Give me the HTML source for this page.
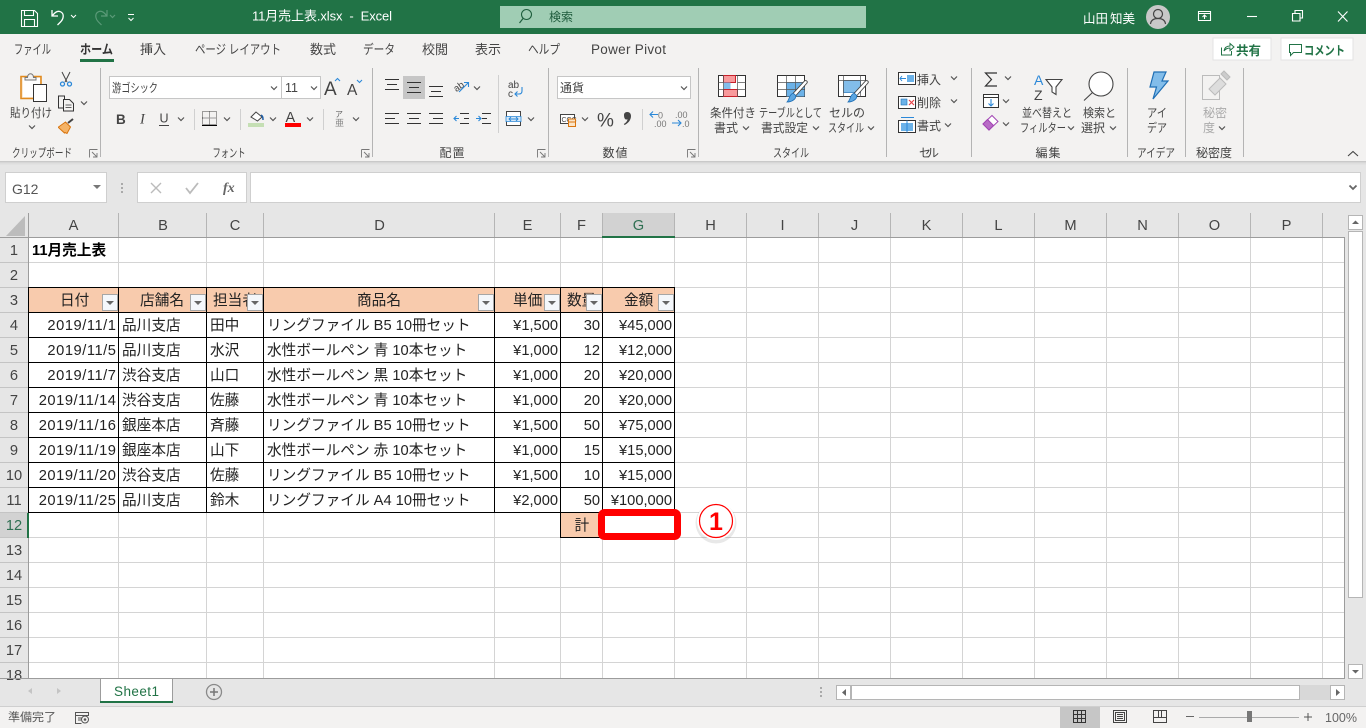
<!DOCTYPE html>
<html lang="ja"><head><meta charset="utf-8"><title>11月売上表.xlsx - Excel</title>
<style>
html,body{margin:0;padding:0;width:1366px;height:728px;overflow:hidden;background:#e6e6e6}
svg{display:block;position:absolute;left:0;top:0}
text{font-family:"Liberation Sans","Noto Sans CJK JP",sans-serif;white-space:pre}
.t{font-size:12px;fill:#444}
.tab{font-size:13px;fill:#444}
.g{font-size:12px;fill:#444}
.c{font-size:14.67px;fill:#222}
.r{text-anchor:end}
.m{text-anchor:middle}
.h{font-size:14.67px;fill:#444;text-anchor:middle}
.d{letter-spacing:.55px}
.l{stroke:#d4d4d4;stroke-width:1;shape-rendering:crispEdges}
.k{stroke:#000;stroke-width:1;shape-rendering:crispEdges}
.s{stroke:#b4b4b4;stroke-width:1.2;shape-rendering:crispEdges}
.ch{fill:none;stroke:#555;stroke-width:1.2}
</style></head><body>
<svg width="1366" height="728" viewBox="0 0 1366 728" xmlns="http://www.w3.org/2000/svg">
<defs>
<path id="v" class="ch" d="M-3-1.5 0 1.5 3-1.5"/>
<g id="fb"><rect x=".5" y=".5" width="15" height="16" fill="#f4f7fb" stroke="#a6a6a6"/><path d="M4 7h8l-4 4z" fill="#666"/></g>
</defs>

<!-- backgrounds -->
<rect width="1366" height="728" fill="#e6e6e6"/>
<rect y="34" width="1366" height="127" fill="#f3f2f1"/>
<rect y="161" width="1366" height="1" fill="#c9c9c9"/>
<rect y="162" width="1366" height="1" fill="#d6d6d6"/>
<rect y="163" width="1366" height="1" fill="#dedede"/>
<rect y="164" width="1366" height="1" fill="#e2e2e2"/>
<rect width="1366" height="34" fill="#217346"/>

<!-- title bar -->
<g fill="none" stroke="#fff" stroke-width="1.100">
<path d="M21.500 10.500h13l3 3v13h-16zM24.500 10.500v5h9v-5M24.500 26v-6.500h10V26"/>
<path d="M52 10v6h6M52.500 15.500c3-4 6-5 8.500-3.500 3.500 2 2.500 7-.5 10l-3 3" stroke-width="1.300"/>
<path d="M71 15l2.500 2.500L76 15" stroke-width="1"/>
<path d="M128 14.500h6M128.500 18l2.500 2.500 2.500-2.500" stroke-width="1"/>
</g>
<g fill="none" stroke="#5b9a78" stroke-width="1.200"><path d="M107 10v6h-6M106.500 15.500c-3-4-6-5-8.500-3.500-3.500 2-2.500 7 .5 10l3 3"/><path d="M110 15l2.500 2.500L115 15"/></g>
<text x="252" y="20.500" font-size="13" fill="#fff" textLength="140">11月売上表.xlsx  -  Excel</text>
<rect x="500" y="6" width="366" height="22" fill="#a0cdb4"/>
<circle cx="526.500" cy="14.500" r="5" fill="none" stroke="#1f5f3e" stroke-width="1.100"/><path d="M523 18.500l-3.500 4.500" stroke="#1f5f3e" stroke-width="1.200"/>
<text x="549" y="21" font-size="12" fill="#1e5b3c">検索</text>
<text x="1083" y="23" font-size="12.500" fill="#fff">山田</text><text x="1110" y="23" font-size="12.500" fill="#fff">知美</text>
<circle cx="1158" cy="17" r="12" fill="#c8c8c8"/>
<circle cx="1158" cy="14" r="4.500" fill="none" stroke="#444" stroke-width="1.200"/><path d="M1150.500 24c.5-4 3.500-5.500 7.500-5.500s7 1.500 7.500 5.500" fill="none" stroke="#444" stroke-width="1.200"/>
<g fill="none" stroke="#fff" stroke-width="1.100">
<path d="M1198.500 11.500h12v9h-12zM1198.500 13.500h12"/><path d="M1204.500 19v-4M1202.500 17l2-2 2 2"/>
<path d="M1247 16.500h10"/>
<path d="M1292.500 13.500h7.500v7.500h-7.500z"/><path d="M1295 13v-2.500h7.500V18H1300"/>
<path d="M1338 11.500l9.500 10M1347.500 11.500l-9.500 10"/>
</g>

<!-- tabs -->
<text class="tab" x="14" y="54" textLength="37" lengthAdjust="spacingAndGlyphs">ファイル</text>
<text class="tab" x="80" y="54" font-weight="700" style="fill:#333" textLength="33" lengthAdjust="spacingAndGlyphs">ホーム</text>
<rect x="80" y="59" width="34" height="3" fill="#217346"/>
<text class="tab" x="140" y="54">挿入</text>
<text class="tab" x="195" y="54" textLength="86" lengthAdjust="spacingAndGlyphs">ページ レイアウト</text>
<text class="tab" x="310" y="54">数式</text>
<text class="tab" x="363" y="54" textLength="32" lengthAdjust="spacingAndGlyphs">データ</text>
<text class="tab" x="422" y="54">校閲</text>
<text class="tab" x="475" y="54">表示</text>
<text class="tab" x="528" y="54" textLength="32" lengthAdjust="spacingAndGlyphs">ヘルプ</text>
<text class="tab" x="591" y="54" style="font-size:13.500px" textLength="75">Power Pivot</text>

<!-- share / comment -->
<rect x="1213" y="38" width="58" height="22" fill="#fff" stroke="#e3e3e3"/>
<rect x="1281" y="38" width="72" height="22" fill="#fff" stroke="#e3e3e3"/>
<path d="M1221.500 47.500v7.500h10v-4M1224 51c.5-3 2.500-5 6-5v-2.500l4 3.500-4 3.500V48c-2.500 0-4.500 1-6 3z" fill="none" stroke="#217346"/>
<text x="1236" y="55" font-size="12.500" font-weight="700" fill="#217346">共有</text>
<path d="M1289.500 44.500h12v8h-8l-3 3v-3h-1z" fill="none" stroke="#217346"/>
<text x="1304" y="55" font-size="12.500" font-weight="700" fill="#217346" textLength="41" lengthAdjust="spacingAndGlyphs">コメント</text>

<!-- group separators -->
<g class="s"><path d="M100.500 68v89M372.500 68v89M548.500 68v89M698.500 68v89M886.500 68v89M971.500 68v89M1127.500 68v89M1185.500 68v89M1243.500 68v89"/></g>

<!-- clipboard -->
<path d="M21 76.500h20v22H21z" fill="#fbe9d2" stroke="#e08a1e" stroke-width="1.600"/>
<rect x="23" y="78" width="17" height="19" fill="#fff"/>
<path d="M25 77.500h2.500c0-5 6-5 6 0H36v2.500H25z" fill="#f3f2f1" stroke="#777"/>
<rect x="33.500" y="84.500" width="13" height="17" fill="#fff" stroke="#333"/>
<text class="t" x="10" y="117" textLength="42" lengthAdjust="spacingAndGlyphs">貼り付け</text>
<use href="#v" x="32" y="127"/>
<g fill="none" stroke="#444"><path d="M62 72l5 10M70 72l-5 10"/><circle cx="62.500" cy="84" r="2" stroke="#2b88d8" stroke-width="1.300"/><circle cx="69.500" cy="84" r="2" stroke="#2b88d8" stroke-width="1.300"/></g>
<g fill="#f3f2f1" stroke="#333"><path d="M58.500 96h6v12h-6z"/><path d="M63.500 99.500h6l4 4v7.500h-10z"/><path d="M65.500 105h6M65.500 107.500h6" stroke-width=".8"/></g>
<use href="#v" x="84" y="103"/>
<path d="M58.500 127l7-5 5 5-3.500 6.500-2-1-.5.500-6-5.500z" fill="#f5b366" stroke="#d9750f"/>
<path d="M68 123l5-4" stroke="#444" stroke-width="2"/>
<text class="g" x="12" y="157" textLength="60" lengthAdjust="spacingAndGlyphs">クリップボード</text>
<path d="M89.500 149.500h8M89.500 149.500v8M92 152l5 5M97 153v4h-4" fill="none" stroke="#777" stroke-width=".9"/>

<!-- font -->
<rect x="109.500" y="76.500" width="172" height="22" fill="#fff" stroke="#c6c6c6"/>
<rect x="281.500" y="76.500" width="39" height="22" fill="#fff" stroke="#c6c6c6"/>
<text x="112" y="92" font-size="12" fill="#444" textLength="46" lengthAdjust="spacingAndGlyphs">游ゴシック</text>
<use href="#v" x="274" y="88"/>
<text x="285" y="92" font-size="12.500" fill="#444">11</text>
<use href="#v" x="314" y="88"/>
<text x="324" y="95" font-size="19" fill="#444">A</text>
<path d="M335 81l2.500-2.500 2.500 2.500" fill="none" stroke="#2b88d8" stroke-width="1.100"/>
<text x="347" y="95" font-size="15.500" fill="#444">A</text>
<path d="M357 80l2.500 2.500L362 80" fill="none" stroke="#2b88d8" stroke-width="1.100"/>
<text x="116" y="124" font-size="13.500" font-weight="700" fill="#444">B</text>
<text x="140" y="123.500" fill="#444" style="font-family:'Liberation Serif',serif;font-size:14.500px;font-style:italic">I</text>
<text x="159.500" y="122.500" font-size="12.500" fill="#444">U</text><path d="M159 125.500h10" stroke="#444" shape-rendering="crispEdges"/>
<use href="#v" x="181" y="119"/>
<path d="M194.500 109v21M240.500 109v21M323.500 109v21" stroke="#d0d0d0" shape-rendering="crispEdges"/>
<path d="M202.500 111.500h14v13h-14zM209.500 111.500v13M202.500 118h14" fill="none" stroke="#444" stroke-dasharray="1 1" shape-rendering="crispEdges"/><path d="M202 125.500h15" stroke="#000" shape-rendering="crispEdges"/>
<use href="#v" x="227" y="119"/>
<path d="M251 117l5-5 6 5-4.500 4z" fill="#fff" stroke="#444"/><path d="M261 115c2 1 2 3 2 5" stroke="#1f5fa8" stroke-width="1.500" fill="none"/>
<rect x="248" y="123" width="16" height="4" fill="#c5dfb4"/>
<use href="#v" x="273" y="119"/>
<text x="285.500" y="122" font-size="14.500" fill="#444">A</text>
<rect x="285" y="123" width="16" height="4" fill="#f00"/>
<use href="#v" x="310" y="119"/>
<text x="335" y="117" font-size="8" fill="#666">ア</text><text x="335" y="126" font-size="9" fill="#888">亜</text>
<use href="#v" x="356" y="119"/>
<text class="g m" x="229" y="157" textLength="33" lengthAdjust="spacingAndGlyphs">フォント</text>
<path d="M361.500 149.500h8M361.500 149.500v8M364 152l5 5M369 153v4h-4" fill="none" stroke="#777" stroke-width=".9"/>

<!-- alignment -->
<rect x="403" y="76" width="22" height="23" fill="#c6c6c6"/>
<g stroke="#333" stroke-width="1" shape-rendering="crispEdges">
<path d="M385 79.500h14M387 84.500h10M385 89.500h14"/>
<path d="M407 82.500h14M409 87.500h10M407 92.500h14"/>
<path d="M429 86.500h14M431 91.500h10M429 96.500h14"/>
<path d="M385 113.500h14M385 118.500h10M385 123.500h14"/>
<path d="M407 113.500h14M409 118.500h10M407 123.500h14"/>
<path d="M429 113.500h14M433 118.500h10M429 123.500h14"/>
<path d="M460 113.500h9M464 118.500h5M460 123.500h9"/>
<path d="M482 113.500h9M482 118.500h5M482 123.500h9"/>
</g>
<path d="M459 118.500h-5M456.500 116l-2.500 2.500 2.500 2.500" fill="none" stroke="#2b88d8" stroke-width="1.100"/>
<path d="M476 118.500h5M478.500 116l2.500 2.500-2.500 2.500" fill="none" stroke="#2b88d8" stroke-width="1.100"/>
<text x="453" y="90" font-size="9.500" fill="#444" transform="rotate(-35 458 86)">ab</text>
<path d="M459 92l9-9M464 82.500h4.500V87" fill="none" stroke="#2b88d8" stroke-width="1.100"/>
<use href="#v" x="477" y="88"/>
<path d="M498.500 75v58" stroke="#d0d0d0" shape-rendering="crispEdges"/>
<text x="508" y="88" font-size="10" fill="#444">ab</text><text x="508" y="97" font-size="10" fill="#444">c</text>
<path d="M522 87v4c0 2-1 3-3 3h-4M517.500 91.500L515 94l2.500 2.500" fill="none" stroke="#2b88d8" stroke-width="1.100"/>
<path d="M506.500 111.500h14v14h-14z" fill="#fff" stroke="#444"/><path d="M506 116.500h15v5h-15z" fill="#d6e8f7" stroke="#2b88d8" stroke-width=".8"/><path d="M509 119h9M511 117l-2 2 2 2M516 117l2 2-2 2" stroke="#2b88d8" fill="none" stroke-width=".9"/>
<use href="#v" x="531" y="119"/>
<text class="g m" x="452" y="157" textLength="25">配置</text>
<path d="M537.500 149.500h8M537.500 149.500v8M540 152l5 5M545 153v4h-4" fill="none" stroke="#777" stroke-width=".9"/>

<!-- number -->
<rect x="557.500" y="76.500" width="133" height="22" fill="#fff" stroke="#c6c6c6"/>
<text x="560" y="92" font-size="12" fill="#444">通貨</text>
<use href="#v" x="684" y="88"/>
<path d="M560.500 114.500h14v9h-14z" fill="#fff" stroke="#444"/>
<text x="561.500" y="122" font-size="7" fill="#444">CCC</text>
<path d="M568.500 119h7v7.500h-7z" fill="#fbe5c8" stroke="#d9750f"/><path d="M568.500 122h7" stroke="#d9750f"/>
<use href="#v" x="585" y="119"/>
<text x="597" y="126.500" font-size="19" fill="#444">%</text>
<path d="M624 115c0-2 1.500-3 3.300-3 2.200 0 3.700 1.600 3.700 4 0 4-3 7.500-6.500 9l-.7-1c2-1.200 3.500-2.800 3.800-4.800-2 1.100-3.600-.4-3.600-4.200z" fill="#444"/>
<path d="M642.500 109v21" stroke="#d0d0d0" shape-rendering="crispEdges"/>
<text x="658" y="118.500" font-size="9" fill="#777">0</text><text x="654" y="127" font-size="9" fill="#777">.00</text>
<path d="M658 114.500h-8M653 111.500l-3 3 3 3" fill="none" stroke="#2b88d8" stroke-width="1.100"/>
<text x="675" y="118" font-size="9" fill="#777">.00</text><text x="682" y="127" font-size="9" fill="#777">.0</text>
<path d="M672 123h9M678 120l3 3-3 3" fill="none" stroke="#2b88d8" stroke-width="1.100"/>
<text class="g m" x="615" y="157" textLength="25">数値</text>
<path d="M687.500 149.500h8M687.500 149.500v8M690 152l5 5M695 153v4h-4" fill="none" stroke="#777" stroke-width=".9"/>

<!-- styles -->
<path d="M718.500 75.500h27v21h-27z" fill="#fff" stroke="#333"/>
<rect x="723.500" y="75.500" width="12" height="7" fill="#f89a9c" stroke="#c8202a"/>
<rect x="723.500" y="82.500" width="7" height="7" fill="#82bdea"/>
<rect x="723.500" y="89.500" width="14" height="7" fill="#f89a9c" stroke="#c8202a"/>
<path d="M718.500 82.500h5M737.500 82.500h8M718.500 89.500h5M737.500 89.500h8M723.500 75.500v21M737.500 75.500v21" fill="none" stroke="#555" stroke-width=".7"/>
<text class="t m" x="733" y="117" textLength="46" lengthAdjust="spacingAndGlyphs">条件付き</text>
<text class="t" x="714" y="132" textLength="24" lengthAdjust="spacingAndGlyphs">書式</text><use href="#v" x="746" y="128"/>
<path d="M777.500 75.500h27v21h-27z" fill="#fff" stroke="#333"/>
<rect x="786" y="82" width="18.500" height="14.500" fill="#6cb2e8"/>
<path d="M777.500 82.500h27M777.500 89.500h27M786.500 75.500v21M795.500 75.500v21" fill="none" stroke="#555" stroke-width=".7"/>
<path d="M807 83l-11.500 13-2.500-2.500L804.500 81c1.500-1.200 3.500.4 2.500 2z" fill="#fff" stroke="#444" stroke-width=".9"/>
<path d="M793 93.500c3.500 1 3.500 4.500.5 6.500-2 1.500-4 2-6.500 2 1.500-1.500 1.800-3.500 2.800-5.500 1-2 1.700-3 3.200-3z" fill="#5ba6e2" stroke="#1f6fb5" stroke-width=".8"/>
<text class="t" x="759" y="117" textLength="63" lengthAdjust="spacingAndGlyphs">テーブルとして</text>
<text class="t" x="761" y="132" textLength="47" lengthAdjust="spacingAndGlyphs">書式設定</text><use href="#v" x="816" y="128"/>
<path d="M838.500 75.500h27v21h-27z" fill="#fff" stroke="#333"/>
<rect x="843.500" y="80.500" width="17" height="12" fill="#82bdea" stroke="#1f6fb5" stroke-width=".7"/>
<path d="M838.500 80.500h27M860.500 75.500v21M843.500 75.500v21" fill="none" stroke="#555" stroke-width=".7"/>
<path d="M868 83l-11.500 13-2.500-2.500L865.500 81c1.500-1.200 3.500.4 2.500 2z" fill="#fff" stroke="#444" stroke-width=".9"/>
<path d="M854 93.500c3.500 1 3.500 4.500.5 6.500-2 1.500-4 2-6.500 2 1.500-1.500 1.800-3.500 2.800-5.500 1-2 1.700-3 3.200-3z" fill="#5ba6e2" stroke="#1f6fb5" stroke-width=".8"/>
<text class="t m" x="847" y="117">セルの</text>
<text class="t" x="828" y="132" textLength="36" lengthAdjust="spacingAndGlyphs">スタイル</text><use href="#v" x="871" y="128"/>
<text class="g m" x="791" y="157" textLength="36" lengthAdjust="spacingAndGlyphs">スタイル</text>

<!-- cells -->
<path d="M898.500 72.500h17v12h-17z" fill="#fff" stroke="#333"/><rect x="907" y="75" width="7" height="7" fill="#6cb2e8"/><path d="M906 78.500h-6M902 76l-2 2.500 2 2.500" stroke="#2b88d8" fill="none"/>
<text class="t" x="917" y="84">挿入</text><use href="#v" x="954" y="78"/>
<path d="M898.500 96.500h17v12h-17z" fill="#fff" stroke="#333"/><rect x="901" y="99" width="6" height="6" fill="#6cb2e8" stroke="#1f6fb5" stroke-width=".6"/><path d="M909 100l5 5M914 100l-5 5" stroke="#e8434a" stroke-width="1.200"/>
<text class="t" x="917" y="107">削除</text><use href="#v" x="954" y="101"/>
<path d="M898.500 120.500h17v12h-17z" fill="#fff" stroke="#333"/><rect x="901" y="123" width="12" height="8" fill="#6cb2e8"/><path d="M901 117.500h13M907 120.500v12" stroke="#2b88d8" fill="none"/>
<text class="t" x="917" y="130">書式</text><use href="#v" x="948" y="125"/>
<text class="g m" x="929" y="157" textLength="20">セル</text>

<!-- editing -->
<path d="M997 73h-11.500l6 6.500-6 6.500H997" fill="none" stroke="#333" stroke-width="1.200"/><use href="#v" x="1008" y="78"/>
<path d="M983.500 94.500h15v13h-15zM983.500 97.500h15" fill="#fff" stroke="#333"/><path d="M991 99v7M988.500 103.500l2.500 2.500 2.500-2.500" stroke="#2b88d8" fill="none" stroke-width="1.100"/><use href="#v" x="1006" y="101"/>
<path d="M983 124l9-8.500 6 6-9 8.500z" fill="#fff" stroke="#a245b4"/><path d="M983 124l4.500-4.500 6 6-4.500 4.500z" fill="#b86cc6" stroke="#a245b4"/><use href="#v" x="1006" y="124"/>
<text x="1034" y="85" font-size="14" fill="#2b88d8">A</text><text x="1034" y="100" font-size="14" fill="#444">Z</text>
<path d="M1046 79.500h16l-6 7.500v7.500l-4-2.500v-5z" fill="#fff" stroke="#444" stroke-width="1.100"/>
<text class="t m" x="1047" y="117" textLength="50" lengthAdjust="spacingAndGlyphs">並べ替えと</text>
<text class="t" x="1020" y="132" textLength="46" lengthAdjust="spacingAndGlyphs">フィルター</text><use href="#v" x="1071" y="128"/>
<circle cx="1101" cy="84" r="12" fill="#fff" stroke="#444" stroke-width="1.100"/><path d="M1092.500 92.500l-8.500 8" stroke="#444" stroke-width="1.100"/>
<text class="t" x="1083" y="117" textLength="33" lengthAdjust="spacingAndGlyphs">検索と</text>
<text class="t" x="1081" y="132">選択</text><use href="#v" x="1113" y="128"/>
<text class="g m" x="1048" y="157" textLength="25">編集</text>

<!-- ideas / sensitivity -->
<path d="M1154 72h12l-4 9h6l-15 18 3.500-12h-6.500z" fill="#82bdea" stroke="#1f6fb5" stroke-width="1.200"/>
<text class="t m" x="1157" y="117" textLength="20" lengthAdjust="spacingAndGlyphs">アイ</text>
<text class="t m" x="1157" y="132" textLength="20" lengthAdjust="spacingAndGlyphs">デア</text>
<text class="g m" x="1156" y="157" textLength="38" lengthAdjust="spacingAndGlyphs">アイデア</text>
<path d="M1204.500 75.500h15v24h-17v-24z" fill="none" stroke="#bbb"/>
<path d="M1209 89l11-11 6 6-11 11z" fill="#ddd" stroke="#bbb"/><path d="M1221 74l3-3 6 6-3 3z" fill="#ccc" stroke="#bbb"/>
<text class="t m" x="1215" y="117" style="fill:#aaa">秘密</text>
<text class="t" x="1203" y="132" style="fill:#aaa">度</text><use href="#v" x="1222" y="128" style="stroke:#aaa"/>
<text class="g m" x="1214" y="157" textLength="36" lengthAdjust="spacingAndGlyphs">秘密度</text>
<path d="M1348 156l5-4.500 5 4.500" fill="none" stroke="#444" stroke-width="1.100"/>

<!-- formula bar -->
<rect x="5.500" y="172.500" width="101" height="30" fill="#fff" stroke="#cfcfcf"/>
<text x="12" y="194" font-size="14" fill="#555">G12</text>
<path d="M93 185h8l-4 4z" fill="#777"/>
<g fill="#aaa"><rect x="121" y="183" width="2" height="2"/><rect x="121" y="187" width="2" height="2"/><rect x="121" y="191" width="2" height="2"/></g>
<rect x="137.500" y="172.500" width="109" height="30" fill="#fff" stroke="#cfcfcf"/>
<path d="M151 183l10 10M161 183l-10 10" stroke="#bbb" stroke-width="1.400"/>
<path d="M186 188l4 5 8-10" fill="none" stroke="#bbb" stroke-width="1.800"/>
<text x="223" y="192" fill="#666" style="font-family:'Liberation Serif',serif;font-size:14px;font-style:italic;font-weight:700">fx</text>
<rect x="250.500" y="172.500" width="1110" height="30" fill="#fff" stroke="#cfcfcf"/>
<path d="M1349.500 185.500l3.500 3.500 3.500-3.500" fill="none" stroke="#666" stroke-width="1.800"/>

<!-- sheet -->
<rect x="29" y="238" width="1316" height="440" fill="#fff"/>
<rect x="602" y="213" width="73" height="24" fill="#d2d2d2"/>
<path d="M25 216v20H6z" fill="#bcbcbc"/>
<g class="l" style="stroke:#b5b5b5"><path d="M28.500 213v24M118.500 213v24M206.500 213v24M263.500 213v24M494.500 213v24M560.500 213v24M602.500 213v24M674.500 213v24M746.500 213v24M818.500 213v24M890.500 213v24M962.500 213v24M1034.500 213v24M1106.500 213v24M1178.500 213v24M1250.500 213v24M1322.500 213v24"/></g>
<path d="M0 237.500h1345M1344.500 237v441" stroke="#9c9c9c" fill="none" shape-rendering="crispEdges"/>
<rect x="602" y="236" width="73" height="2" fill="#217346"/>
<g class="l">
<path d="M118.500 238v440M206.500 238v440M263.500 238v440M494.500 238v440M560.500 238v440M602.500 238v440M674.500 238v440M746.500 238v440M818.500 238v440M890.500 238v440M962.500 238v440M1034.500 238v440M1106.500 238v440M1178.500 238v440M1250.500 238v440M1322.500 238v440"/>
<path d="M0 262.500h1344M0 287.500h1344M0 312.500h1344M0 337.500h1344M0 362.500h1344M0 387.500h1344M0 412.500h1344M0 437.500h1344M0 462.500h1344M0 487.500h1344M0 512.500h1344M0 537.500h1344M0 562.500h1344M0 587.500h1344M0 612.500h1344M0 637.500h1344M0 662.500h1344" />
</g>
<rect x="0" y="238" width="28" height="440" fill="#e6e6e6"/>
<rect x="0" y="513" width="28" height="25" fill="#d2d2d2"/>
<path d="M0 262.500h28M0 287.500h28M0 312.500h28M0 337.500h28M0 362.500h28M0 387.500h28M0 412.500h28M0 437.500h28M0 462.500h28M0 487.500h28M0 512.500h28M0 537.500h28M0 562.500h28M0 587.500h28M0 612.500h28M0 637.500h28M0 662.500h28" stroke="#c4c4c4" shape-rendering="crispEdges"/>
<path d="M28.500 213v465" stroke="#9c9c9c" shape-rendering="crispEdges"/>
<rect x="27" y="513" width="2" height="25" fill="#217346"/>
<rect x="29" y="288" width="645" height="24" fill="#f8cbad"/>
<rect x="561" y="513" width="41" height="24" fill="#f8cbad"/>
<g class="k">
<path d="M29 287.500h646M29 312.500h646M29 337.500h646M29 362.500h646M29 387.500h646M29 412.500h646M29 437.500h646M29 462.500h646M29 487.500h646M29 512.500h646"/>
<path d="M28.500 287v226M118.500 287v226M206.500 287v226M263.500 287v226M494.500 287v226M560.500 287v251M602.500 287v251M674.500 287v226"/>
<path d="M560 537.500h43"/>
</g>

<!-- column headers -->
<text class="h" x="73.500" y="230">A</text><text class="h" x="163" y="230">B</text><text class="h" x="235" y="230">C</text><text class="h" x="379.500" y="230">D</text><text class="h" x="527.500" y="230">E</text><text class="h" x="581.500" y="230">F</text><text class="h" x="638.500" y="230" style="fill:#2f6f52">G</text><text class="h" x="710.500" y="230">H</text><text class="h" x="782.500" y="230">I</text><text class="h" x="854.500" y="230">J</text><text class="h" x="926.500" y="230">K</text><text class="h" x="998.500" y="230">L</text><text class="h" x="1070.500" y="230">M</text><text class="h" x="1142.500" y="230">N</text><text class="h" x="1214.500" y="230">O</text><text class="h" x="1286.500" y="230">P</text>

<!-- row headers -->
<text class="h" x="14" y="255">1</text><text class="h" x="14" y="280">2</text><text class="h" x="14" y="305">3</text><text class="h" x="14" y="330">4</text><text class="h" x="14" y="355">5</text><text class="h" x="14" y="380">6</text><text class="h" x="14" y="405">7</text><text class="h" x="14" y="430">8</text><text class="h" x="14" y="455">9</text><text class="h" x="14" y="480">10</text><text class="h" x="14" y="505">11</text><text class="h" x="14" y="530" style="fill:#2f6f52">12</text><text class="h" x="14" y="555">13</text><text class="h" x="14" y="580">14</text><text class="h" x="14" y="605">15</text><text class="h" x="14" y="630">16</text><text class="h" x="14" y="655">17</text><text class="h" x="14" y="680">18</text>

<text class="c" x="32" y="255" font-weight="700" style="fill:#000">11月売上表</text>

<!-- table header -->
<text class="c" x="60" y="305">日付</text>
<text class="c" x="140" y="305">店舗名</text>
<text class="c" x="213" y="305">担当者</text>
<text class="c" x="357" y="305">商品名</text>
<text class="c" x="513" y="305">単価</text>
<text class="c" x="567" y="305">数量</text>
<text class="c" x="624" y="305">金額</text>
<use href="#fb" x="102" y="294"/><use href="#fb" x="190" y="294"/><use href="#fb" x="247" y="294"/><use href="#fb" x="478" y="294"/><use href="#fb" x="544" y="294"/><use href="#fb" x="586" y="294"/><use href="#fb" x="658" y="294"/>

<!-- rows -->
<text class="c r d" x="116.500" y="330">2019/11/1</text><text class="c" x="122" y="330">品川支店</text><text class="c" x="210" y="330">田中</text><text class="c" x="267" y="330">リングファイル B5 10冊セット</text><text class="c r" x="558" y="330">¥1,500</text><text class="c r" x="600" y="330">30</text><text class="c r" x="672" y="330">¥45,000</text>
<text class="c r d" x="116.500" y="355">2019/11/5</text><text class="c" x="122" y="355">品川支店</text><text class="c" x="210" y="355">水沢</text><text class="c" x="267" y="355">水性ボールペン 青 10本セット</text><text class="c r" x="558" y="355">¥1,000</text><text class="c r" x="600" y="355">12</text><text class="c r" x="672" y="355">¥12,000</text>
<text class="c r d" x="116.500" y="380">2019/11/7</text><text class="c" x="122" y="380">渋谷支店</text><text class="c" x="210" y="380">山口</text><text class="c" x="267" y="380">水性ボールペン 黒 10本セット</text><text class="c r" x="558" y="380">¥1,000</text><text class="c r" x="600" y="380">20</text><text class="c r" x="672" y="380">¥20,000</text>
<text class="c r d" x="116.500" y="405">2019/11/14</text><text class="c" x="122" y="405">渋谷支店</text><text class="c" x="210" y="405">佐藤</text><text class="c" x="267" y="405">水性ボールペン 青 10本セット</text><text class="c r" x="558" y="405">¥1,000</text><text class="c r" x="600" y="405">20</text><text class="c r" x="672" y="405">¥20,000</text>
<text class="c r d" x="116.500" y="430">2019/11/16</text><text class="c" x="122" y="430">銀座本店</text><text class="c" x="210" y="430">斉藤</text><text class="c" x="267" y="430">リングファイル B5 10冊セット</text><text class="c r" x="558" y="430">¥1,500</text><text class="c r" x="600" y="430">50</text><text class="c r" x="672" y="430">¥75,000</text>
<text class="c r d" x="116.500" y="455">2019/11/19</text><text class="c" x="122" y="455">銀座本店</text><text class="c" x="210" y="455">山下</text><text class="c" x="267" y="455">水性ボールペン 赤 10本セット</text><text class="c r" x="558" y="455">¥1,000</text><text class="c r" x="600" y="455">15</text><text class="c r" x="672" y="455">¥15,000</text>
<text class="c r d" x="116.500" y="480">2019/11/20</text><text class="c" x="122" y="480">渋谷支店</text><text class="c" x="210" y="480">佐藤</text><text class="c" x="267" y="480">リングファイル B5 10冊セット</text><text class="c r" x="558" y="480">¥1,500</text><text class="c r" x="600" y="480">10</text><text class="c r" x="672" y="480">¥15,000</text>
<text class="c r d" x="116.500" y="505">2019/11/25</text><text class="c" x="122" y="505">品川支店</text><text class="c" x="210" y="505">鈴木</text><text class="c" x="267" y="505">リングファイル A4 10冊セット</text><text class="c r" x="558" y="505">¥2,000</text><text class="c r" x="600" y="505">50</text><text class="c r" x="672" y="505">¥100,000</text>
<text class="c" x="574.500" y="530">計</text>

<!-- annotation -->
<rect x="601.500" y="512.500" width="76" height="24" rx="3" fill="#fff" stroke="#f00" stroke-width="7"/>
<circle cx="716" cy="523" r="20.500" fill="#000" opacity=".09"/>
<circle cx="716" cy="521" r="19" fill="#fff"/>
<circle cx="716" cy="521" r="16.500" fill="#fff" stroke="#f00" stroke-width="1.200"/>
<text x="716" y="530" font-size="25" font-weight="700" fill="#f00" text-anchor="middle">1</text>

<!-- vertical scrollbar -->
<rect x="1345" y="213" width="21" height="466" fill="#e6e6e6"/>
<rect x="1348.500" y="215.500" width="14" height="14" fill="#fff" stroke="#b5b5b5"/><path d="M1352 224l3.500-3.500 3.500 3.500z" fill="#666"/>
<rect x="1348.500" y="231.500" width="14" height="366" fill="#fff" stroke="#b5b5b5"/>
<rect x="1348.500" y="664.500" width="14" height="14" fill="#fff" stroke="#b5b5b5"/><path d="M1352 670l3.500 3.500 3.500-3.500z" fill="#666"/>

<!-- tab bar -->
<rect x="0" y="678" width="1345" height="1" fill="#9c9c9c"/>
<path d="M32 688v6l-4-3zM57 688v6l4-3z" fill="#c4c4c4"/>
<path d="M100.500 678v24M172.500 678v24" stroke="#9c9c9c" shape-rendering="crispEdges"/>
<rect x="101" y="679" width="71" height="22" fill="#fff"/>
<rect x="100" y="701" width="73" height="2" fill="#217346"/>
<text x="114" y="696" fill="#217346" style="font-size:13.500px" textLength="45">Sheet1</text>
<circle cx="214" cy="692" r="7.500" fill="none" stroke="#8a8a8a" stroke-width="1.300"/><path d="M210 692h8M214 688v8" stroke="#777" stroke-width="1.500"/>
<g fill="#aaa"><rect x="820" y="687" width="2" height="2"/><rect x="820" y="691" width="2" height="2"/><rect x="820" y="695" width="2" height="2"/></g>
<rect x="836.500" y="685.500" width="14" height="14" fill="#fff" stroke="#b5b5b5"/><path d="M846 689v7l-4-3.500z" fill="#666"/>
<rect x="851" y="685" width="485" height="15" fill="#d8d8d8"/>
<rect x="851.500" y="685.500" width="448" height="14" fill="#fff" stroke="#b5b5b5"/>
<rect x="1330.500" y="685.500" width="14" height="14" fill="#fff" stroke="#b5b5b5"/><path d="M1336 689v7l4-3.500z" fill="#666"/>

<!-- status bar -->
<rect x="0" y="707" width="1366" height="21" fill="#f3f2f1"/>
<rect x="0" y="706" width="1366" height="1" fill="#cfcfcf"/>
<text x="8" y="721" font-size="11.500" fill="#555" textLength="48" lengthAdjust="spacingAndGlyphs">準備完了</text>
<path d="M75.500 712.500h13v3h-13zM75.500 715.500v8h6M78 718h4M78 720h3" fill="none" stroke="#555"/><circle cx="85" cy="719.500" r="3.500" fill="none" stroke="#555"/><circle cx="85" cy="719.500" r="1.300" fill="#555"/>
<rect x="1060" y="707" width="40" height="21" fill="#c6c6c6"/>
<path d="M1073.500 710.500h12v12h-12zM1077.500 710.500v12M1081.500 710.500v12M1073.500 714.500h12M1073.500 718.500h12" fill="none" stroke="#333" shape-rendering="crispEdges"/>
<path d="M1113.500 710.500h13v12h-13zM1115.500 712.500h9v8h-9zM1117 714.500h6M1117 716.500h6M1117 718.500h6" fill="none" stroke="#444" shape-rendering="crispEdges"/>
<path d="M1153.500 710.500h13v12h-13zM1153.500 717.500h13M1158.500 710.500v7M1161.500 710.500v7" fill="none" stroke="#444" shape-rendering="crispEdges"/>
<path d="M1186 716.500h8" stroke="#666" shape-rendering="crispEdges"/><path d="M1199 717.500h100" stroke="#aaa" shape-rendering="crispEdges"/>
<rect x="1247" y="711" width="5" height="11" fill="#777"/>
<path d="M1304 717h8M1308 713v8" stroke="#555"/>
<text x="1325" y="722" font-size="12.500" fill="#666">100%</text>
</svg>
</body></html>
